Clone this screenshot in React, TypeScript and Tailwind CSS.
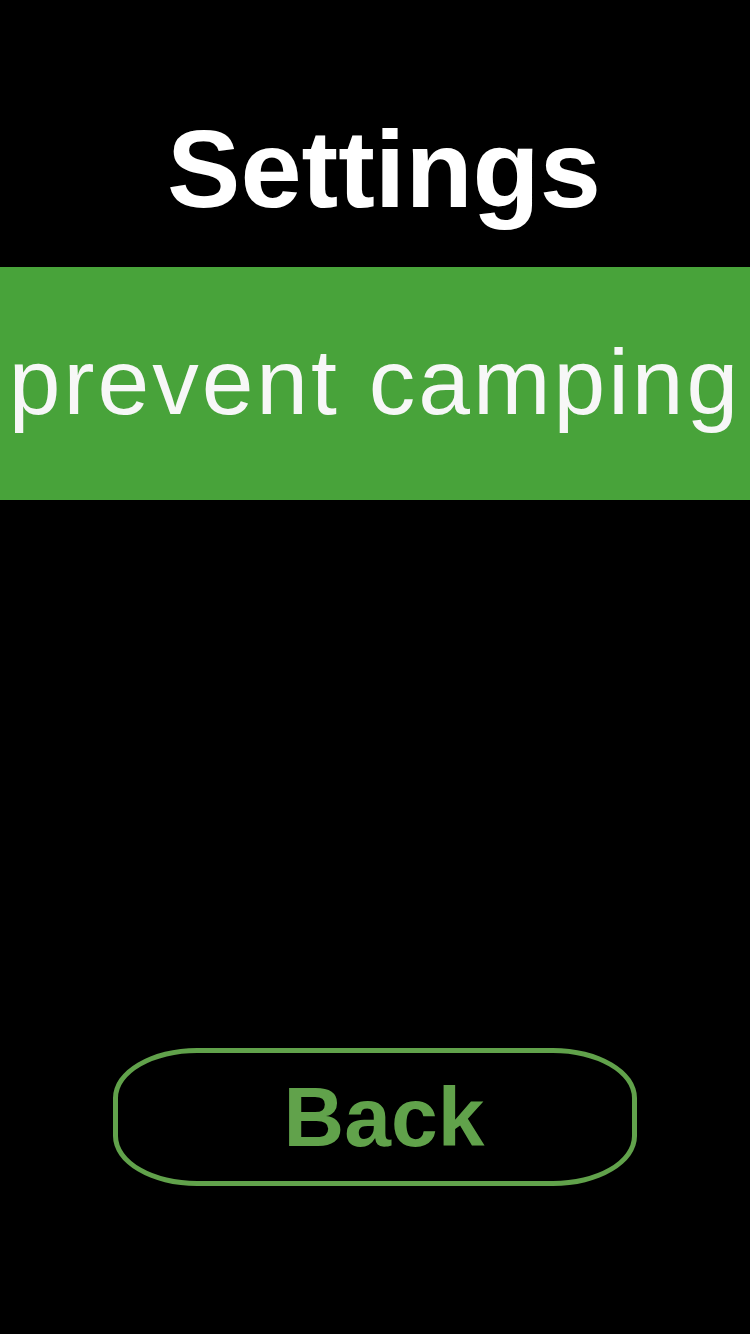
export default function App() {
  return (
    <div
      className="min-h-[1334px] w-full bg-black flex flex-col"
      style={{ fontFamily: '"Liberation Sans", Arial, sans-serif' }}
    >
      {/* Title */}
      <header className="h-[267px] flex items-end justify-center pb-[43px] pl-[18px]">
        <h1 className="text-[110px] leading-none font-bold text-white">Settings</h1>
      </header>

      {/* Setting row */}
      <div className="h-[233px] bg-[#48a33a] flex items-center justify-center pb-[2px]">
        <span className="text-[93px] leading-none tracking-[3px] text-[#f7f7f7]">prevent camping</span>
      </div>

      {/* Back button */}
      <div className="mt-[548px] flex justify-center">
        <button className="w-[524px] h-[138px] border-[5px] border-[#61a24b] rounded-[84px/50px] flex items-center justify-center pl-[18px]">
          <span className="text-[84px] leading-none font-bold text-[#61a24b]">Back</span>
        </button>
      </div>
    </div>
  );
}
